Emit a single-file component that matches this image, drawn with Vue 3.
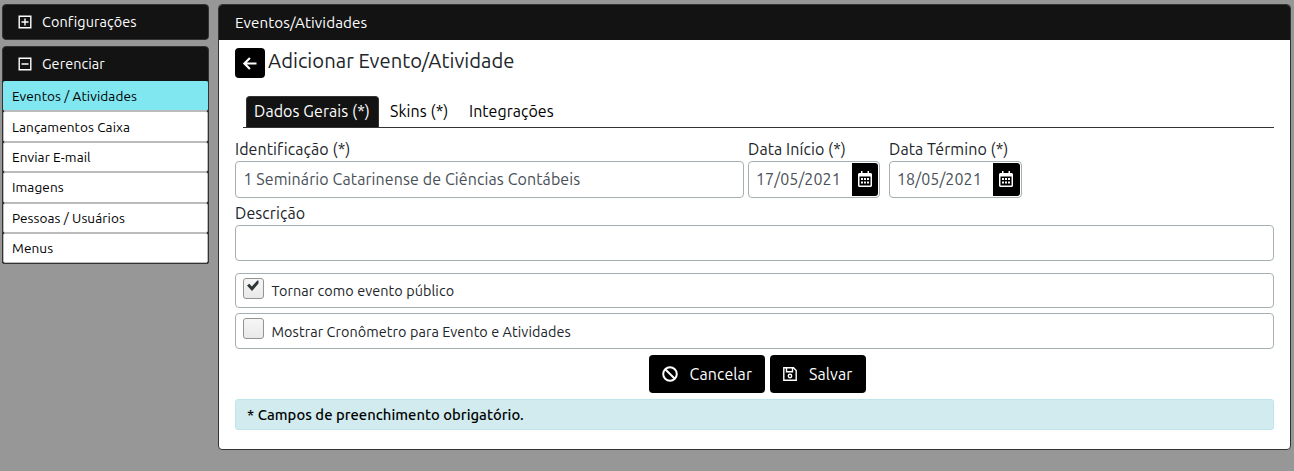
<script setup>
const menu = [
  'Eventos / Atividades',
  'Lançamentos Caixa',
  'Enviar E-mail',
  'Imagens',
  'Pessoas / Usuários',
  'Menus',
]
const dates = [
  { label: 'Data Início (*)', value: '17/05/2021', c: 'd1' },
  { label: 'Data Término (*)', value: '18/05/2021', c: 'd2' },
]
</script>

<template>
  <div class="page">
    <aside>
      <section class="acc">
        <h3>
          <svg width="14" height="14" viewBox="0 0 14 14"><path d="M1.2 1.2h11.6v11.6H1.2zM3.5 7h7M7 3.5v7" /></svg>
          <span>Configurações</span>
        </h3>
      </section>
      <section class="acc open">
        <h3>
          <svg width="14" height="14" viewBox="0 0 14 14"><path d="M1.2 1.2h11.6v11.6H1.2zM3.5 7h7" /></svg>
          <span>Gerenciar</span>
        </h3>
        <ul>
          <li v-for="m in menu" :key="m"><span>{{ m }}</span></li>
        </ul>
      </section>
    </aside>
    <main>
      <header><span>Eventos/Atividades</span></header>
      <div class="body">
        <div class="titlebar">
          <button class="back">
            <svg width="16" height="16" viewBox="0 0 16 16"><path d="M14.500 8.500H2.800M7.900 3L2.400 8.500l5.500 5.500" /></svg>
          </button>
          <h1>Adicionar Evento/Atividade</h1>
        </div>
        <nav>
          <a class="active">Dados Gerais (*)</a>
          <a>Skins (*)</a>
          <a>Integrações</a>
        </nav>
        <div class="row">
          <div class="field ident">
            <label>Identificação (*)</label>
            <div class="input">1 Seminário Catarinense de Ciências Contábeis</div>
          </div>
          <div v-for="d in dates" :key="d.c" class="field" :class="d.c">
            <label>{{ d.label }}</label>
            <div class="input date">
              <span>{{ d.value }}</span>
              <button class="cal">
                <svg width="14" height="16" viewBox="0 0 14 16">
                  <path fill-rule="evenodd" d="M3 0h1.500v2h5V0H11v2h2l1 1v12l-1 1H1l-1-1V3l1-1h2zM1.500 5.500v9h11v-9z" />
                  <path d="M3 7h2v2H3zM6 7h2v2H6zM9 7h2v2H9zM3 10.500h2v2H3zM6 10.500h2v2H6zM9 10.500h2v2H9z" />
                </svg>
              </button>
            </div>
          </div>
        </div>
        <div class="field desc">
          <label>Descrição</label>
          <div class="input"></div>
        </div>
        <div class="check c1">
          <i class="box"><svg width="14" height="13" viewBox="0 0 14 13"><path d="M1 5.400L3.300 3.800l2.500 2.800L11.300.500h1.200v3L6 11z" /></svg></i>
          <span>Tornar como evento público</span>
        </div>
        <div class="check c2">
          <i class="box"></i>
          <span>Mostrar Cronômetro para Evento e Atividades</span>
        </div>
        <div class="actions">
          <button class="cancel">
            <svg width="16" height="16" viewBox="0 0 16 16"><circle cx="8" cy="8" r="6.800" /><path d="M3.200 3.200l9.600 9.600" /></svg>
            <span>Cancelar</span>
          </button>
          <button class="save">
            <svg width="14" height="14" viewBox="0 0 14 14"><path d="M.8.800h9.700l2.700 2.700v9.700H.8zM3.500 1v3.700h6V1" /><circle cx="7" cy="9" r="1.700" /></svg>
            <span>Salvar</span>
          </button>
        </div>
        <div class="note">* Campos de preenchimento obrigatório.</div>
      </div>
    </main>
  </div>
</template>

<style>
body { background: #979797; overflow: hidden; }
</style>
<style scoped>
* { box-sizing: border-box; }
.page { height: 471px; padding: 4px 3px 0 2px; display: flex; gap: 9px; background: #979797; font-family: Ubuntu, "Noto Sans", sans-serif; color: #212529; white-space: nowrap; letter-spacing: .08px; }
svg { flex: none; fill: none; stroke: #fff; stroke-width: 1.4; }
button { border: 0; padding: 0; background: #000; color: #fff; font: inherit; letter-spacing: inherit; display: flex; align-items: center; justify-content: center; }
h1, h3, ul { margin: 0; padding: 0; font-weight: 400; list-style: none; }
aside { width: 207px; flex: none; }
.acc { border: 1px solid #333; border-radius: 4px; background: #131313; height: 36px; margin-bottom: 6px; overflow: hidden; }
.acc.open { height: 218px; border-radius: 4px 4px 2px 2px; }
h3 { height: 34px; display: flex; align-items: center; padding-left: 15px; gap: 10px; color: #fff; font-size: 14.400px; }
li { height: 30.400px; border: 1px solid #bbb; border-radius: 2px; background: #fff; display: flex; align-items: center; padding-left: 8px; font-size: 13.600px; color: #000; }
li:first-child { background: #80e7f1; border-color: #80e7f1; border-bottom-color: #bbb; }
main { width: 1073px; height: 446px; border: 1px solid #333; border-radius: 4px; background: #fff; overflow: hidden; }
header { height: 35px; background: #131313; color: #fff; padding-left: 16px; display: flex; align-items: center; font-size: 15.200px; letter-spacing: .11px; }
.body { padding: 8px 16px 0; font-size: 16px; }
.titlebar { display: flex; gap: 3px; height: 30px; }
.back { width: 30px; height: 30px; border-radius: 4px; }
.back svg { stroke-width: 2.200; }
h1 { font-size: 20.200px; line-height: 26px; letter-spacing: .04px; }
nav { margin: 18px 0 0 8px; padding-left: 3px; height: 32px; display: flex; border-bottom: 1px solid #333; color: #000; }
nav a { height: 31px; line-height: 30px; padding-left: 8px; width: 79px; }
nav a.active { width: 133px; margin-right: 3px; background: #131313; color: #fff; border: 1px solid #333; border-bottom: 0; border-radius: 4px 4px 0 0; padding-left: 7px; line-height: 28px; }
nav a:last-child { letter-spacing: .03px; }
.row { display: flex; margin-top: 9px; }
label { display: block; height: 24px; line-height: 24px; }
.input { height: 37px; border: 1px solid #a5afb1; border-radius: 4px; padding-left: 7.400px; line-height: 35px; color: #495057; }
.ident { width: 509px; margin-right: 4px; }
.ident .input { letter-spacing: .1px; }
.d1 { width: 132px; margin-right: 9px; }
.d2 { width: 133px; }
.date { display: flex; justify-content: space-between; padding: 1px 1px 1px 7px; line-height: 33px; }
.cal { width: 26px; height: 33px; border-radius: 0 3px 3px 0; }
.d2 .cal { width: 27px; }
.cal svg { stroke: none; fill: #fff; margin: 0 1px 1px 0; }
.desc { margin-top: 3px; }
.desc .input { height: 36px; }
.check { border: 1px solid #a5afb1; border-radius: 4px; display: flex; padding-left: 7px; font-size: 14.400px; }
.c1 { margin-top: 12px; height: 35px; line-height: 34px; }
.c2 { margin-top: 5px; height: 36px; line-height: 36px; }
.box { width: 21px; height: 21px; margin: 4px 7.500px 0 0; border: 1px solid #94948e; border-radius: 3px; background: linear-gradient(#f6f6f6, #e9e9e9); display: flex; padding: 1px 0 0 2px; }
.box svg { stroke: none; fill: #2e3436; }
.actions { margin-top: 6px; height: 38px; display: flex; gap: 5px; padding-left: 414px; }
.actions button { height: 38px; border-radius: 4px; justify-content: flex-start; padding-left: 13px; }
.cancel { width: 116px; gap: 11.500px; }
.cancel svg { stroke-width: 2; }
.save { width: 96px; gap: 12px; }
.note { margin-top: 6px; height: 31px; border: 1px solid #bee5eb; border-radius: 3px; background: #d1ebef; padding-left: 11px; line-height: 29px; color: #000; font-size: 14.800px; font-weight: 500; letter-spacing: .03px; }
</style>
